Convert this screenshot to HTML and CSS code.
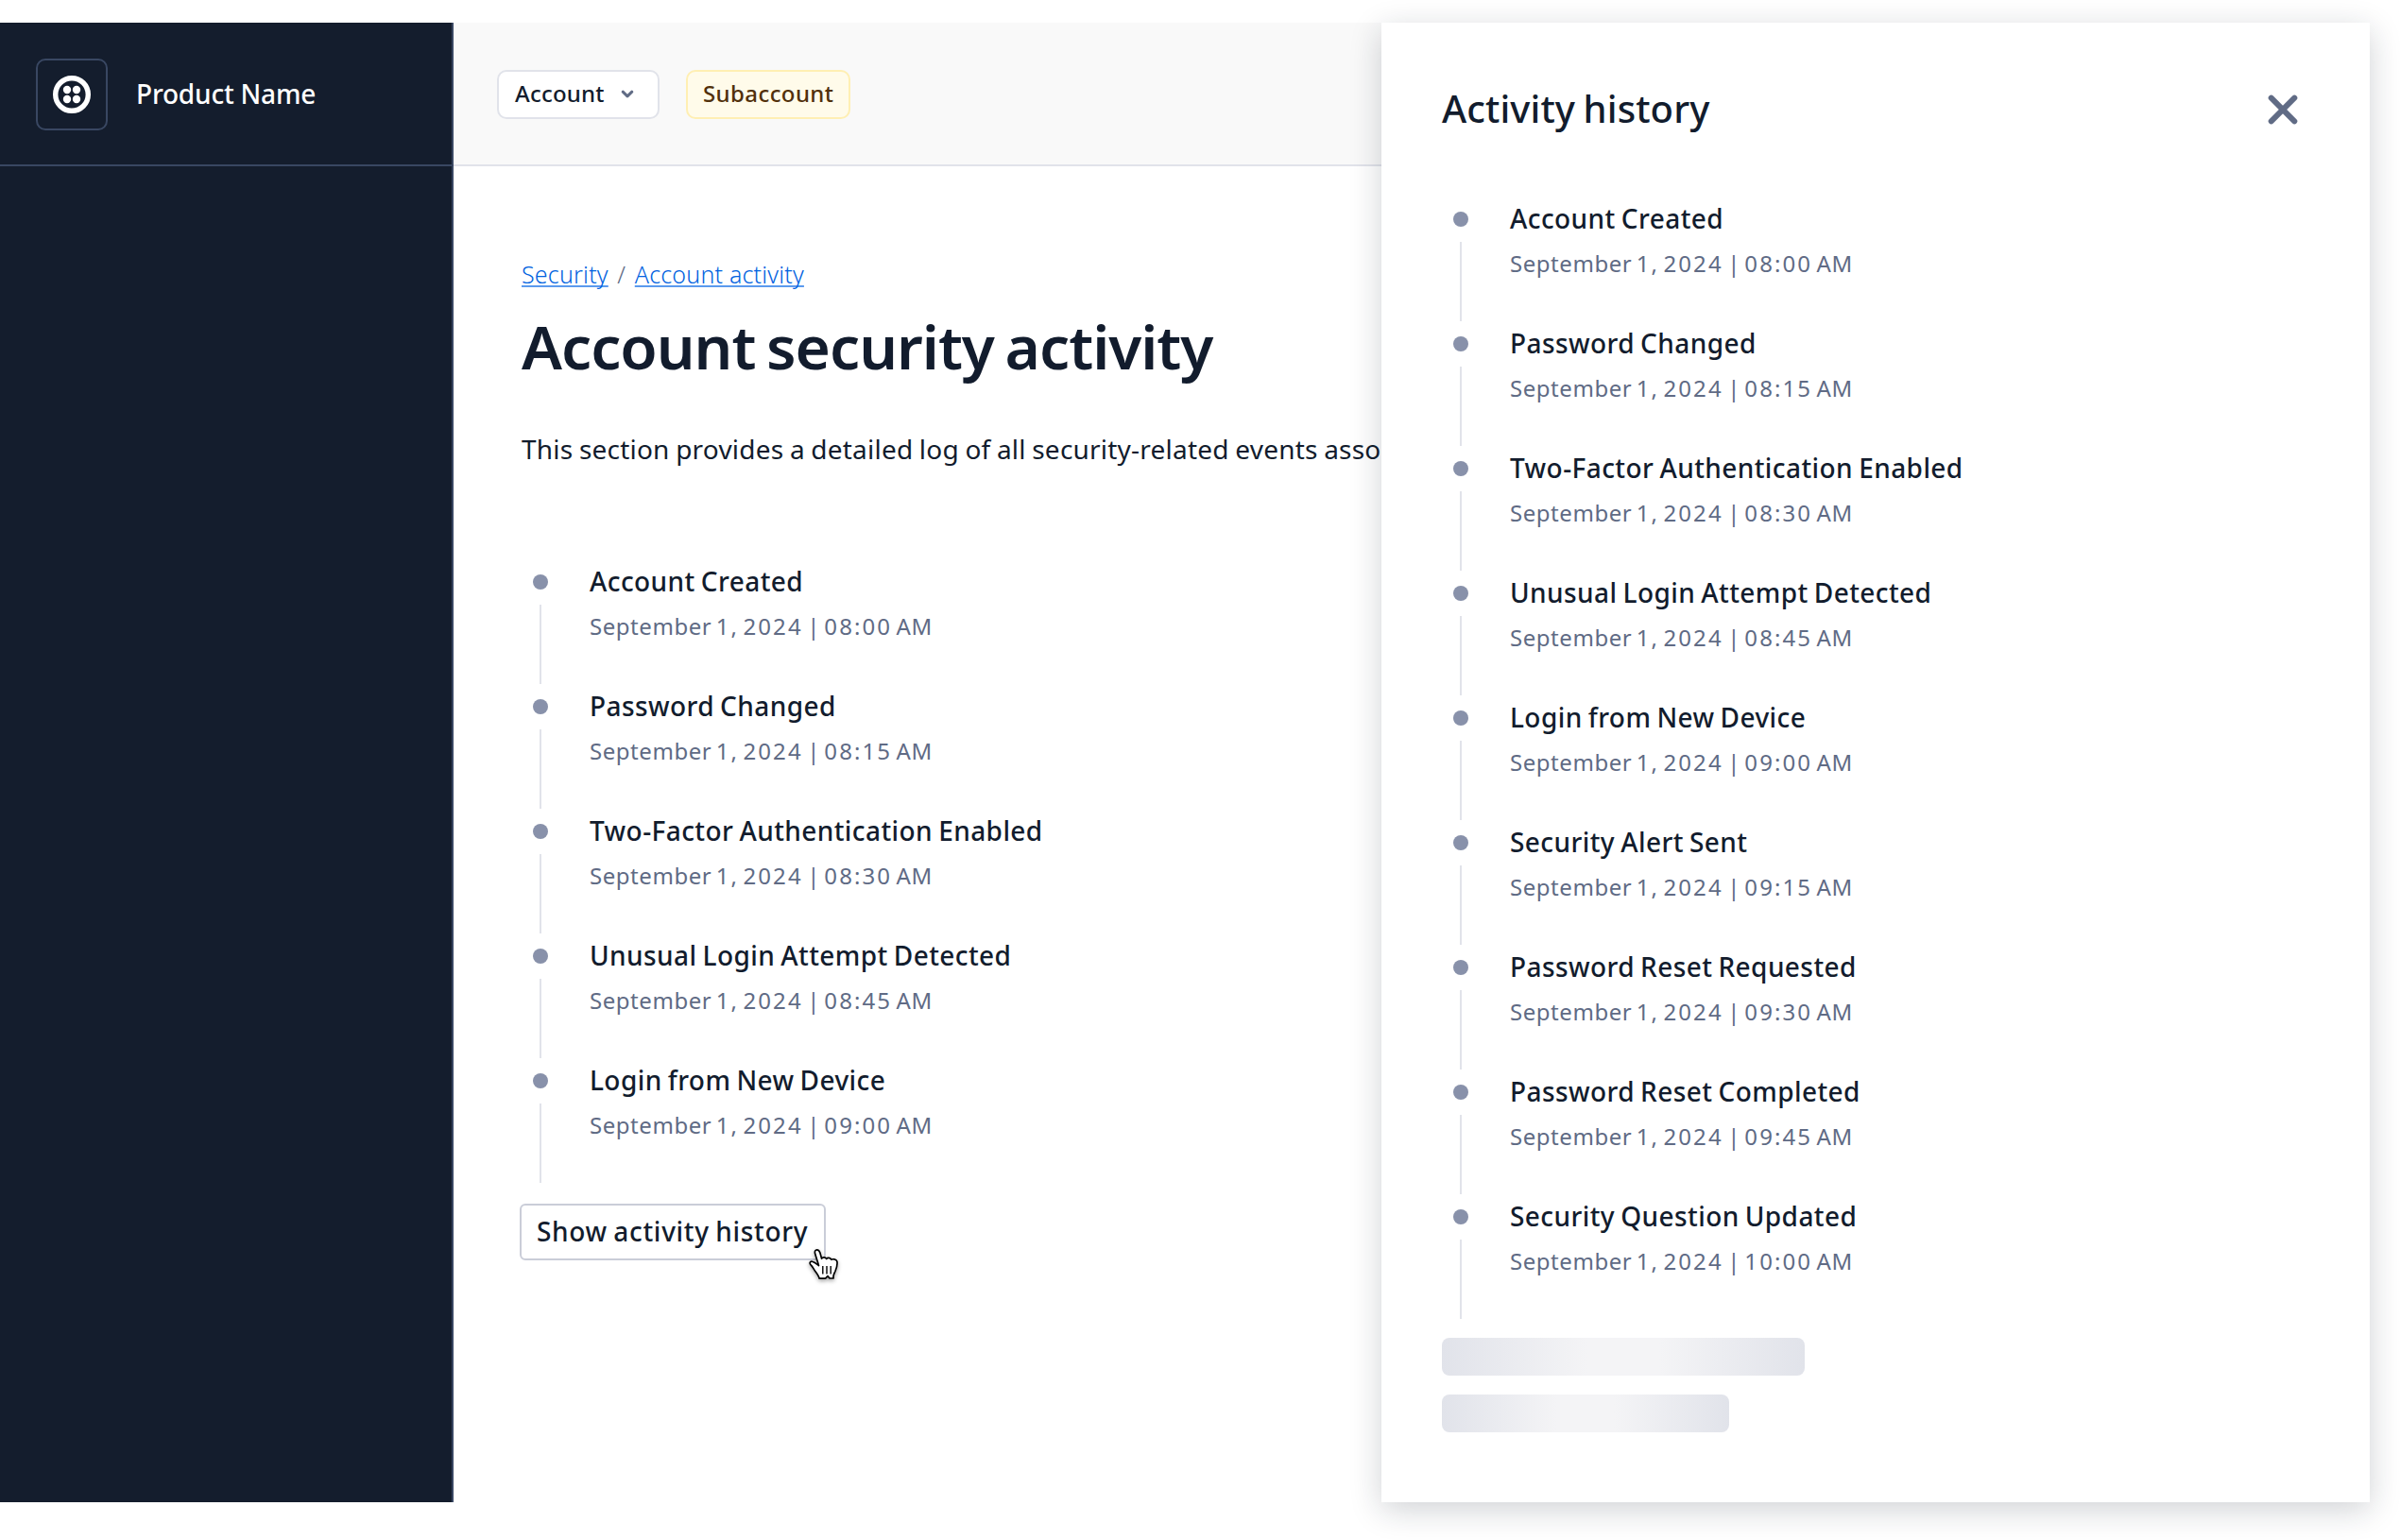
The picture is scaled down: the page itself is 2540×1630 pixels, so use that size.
FILE: index.html
```html
<!DOCTYPE html>
<html lang="en">
<head>
<meta charset="utf-8">
<title>Account security activity</title>
<link rel="stylesheet" href="styles.css">
</head>
<body>
<div class="shell">
  <aside class="sidebar">
    <div class="brand">
      <span class="logo">
        <svg width="40" height="40" viewBox="0 0 40 40"><circle cx="20" cy="20" r="17.3" fill="none" stroke="#fff" stroke-width="5.4"/><g fill="#fff"><circle cx="15" cy="15" r="4.2"/><circle cx="25" cy="15" r="4.2"/><circle cx="15" cy="25" r="4.2"/><circle cx="25" cy="25" r="4.2"/></g></svg>
      </span>
      <span class="brand-name">Product Name</span>
    </div>
  </aside>
  <div class="content">
    <header class="topbar">
      <button class="account">Account
        <svg width="14" height="10" viewBox="0 0 14 10"><path d="M2.2 3.200 7 7.800l4.800-4.600" fill="none" stroke="#606b85" stroke-width="3" stroke-linecap="round" stroke-linejoin="round"/></svg>
      </button>
      <span class="badge">Subaccount</span>
    </header>
    <main class="main">
      <nav class="crumbs"><a href="#">Security</a><span class="slash">/</span><a href="#">Account activity</a></nav>
      <h1>Account security activity</h1>
      <p class="intro">This section provides a detailed log of all security-related events associated</p>
      <ol class="timeline">
        <li><span class="rail"></span><div><h3>Account Created</h3><time>September <b>1,</b> <b>2024</b> | <b>08:00</b> AM</time></div></li>
        <li><span class="rail"></span><div><h3>Password Changed</h3><time>September <b>1,</b> <b>2024</b> | <b>08:15</b> AM</time></div></li>
        <li><span class="rail"></span><div><h3>Two-Factor Authentication Enabled</h3><time>September <b>1,</b> <b>2024</b> | <b>08:30</b> AM</time></div></li>
        <li><span class="rail"></span><div><h3>Unusual Login Attempt Detected</h3><time>September <b>1,</b> <b>2024</b> | <b>08:45</b> AM</time></div></li>
        <li><span class="rail"></span><div><h3>Login from New Device</h3><time>September <b>1,</b> <b>2024</b> | <b>09:00</b> AM</time></div></li>
      </ol>
      <button class="show">Show activity history
        <svg class="cursor" width="50" height="50" viewBox="0 0 50 50"><path d="M20.500 25.500C19.200 20.500 17.600 16.500 16.600 12.800 15.900 10.400 17 8.800 18.600 8.800c1.800 0 2.700 1.200 3.300 3.200l1.700 6.200c.8-1.800 4-2 5 .2 1.200-1.600 4.200-1.400 5.200.8 1.200-.8 5.200-.6 6 1.800.8 3-.4 7-1.800 10.500-1.200 2.500-2 4-2 5.500v2h-4l-2-2.400-2.400 2.600h-6.400c-.6-2.600-2.800-5.600-4.800-8.200-1.600-2.400-2.600-4.600-4.200-6-2-2-.8-4.400 1.400-3.800 2.400.6 4.400 2.300 6.900 4.300z" fill="#fff" stroke="#000" stroke-width="1.700" stroke-linejoin="round"/><path d="M24.800 26v8.500M29 26v8.500M33.200 26v8.500" stroke="#000" stroke-width="1.400"/></svg>
      </button>
    </main>
  </div>
  <section class="drawer">
    <div class="drawer-head">
      <h2>Activity history</h2>
      <svg width="32" height="32" viewBox="0 0 32 32"><path d="M3.700 3.700 28.300 28.300M28.300 3.700 3.700 28.300" stroke="#606b85" stroke-width="6" stroke-linecap="round"/></svg>
    </div>
    <ol class="timeline">
      <li><span class="rail"></span><div><h3>Account Created</h3><time>September <b>1,</b> <b>2024</b> | <b>08:00</b> AM</time></div></li>
      <li><span class="rail"></span><div><h3>Password Changed</h3><time>September <b>1,</b> <b>2024</b> | <b>08:15</b> AM</time></div></li>
      <li><span class="rail"></span><div><h3>Two-Factor Authentication Enabled</h3><time>September <b>1,</b> <b>2024</b> | <b>08:30</b> AM</time></div></li>
      <li><span class="rail"></span><div><h3>Unusual Login Attempt Detected</h3><time>September <b>1,</b> <b>2024</b> | <b>08:45</b> AM</time></div></li>
      <li><span class="rail"></span><div><h3>Login from New Device</h3><time>September <b>1,</b> <b>2024</b> | <b>09:00</b> AM</time></div></li>
      <li><span class="rail"></span><div><h3>Security Alert Sent</h3><time>September <b>1,</b> <b>2024</b> | <b>09:15</b> AM</time></div></li>
      <li><span class="rail"></span><div><h3>Password Reset Requested</h3><time>September <b>1,</b> <b>2024</b> | <b>09:30</b> AM</time></div></li>
      <li><span class="rail"></span><div><h3>Password Reset Completed</h3><time>September <b>1,</b> <b>2024</b> | <b>09:45</b> AM</time></div></li>
      <li><span class="rail"></span><div><h3>Security Question Updated</h3><time>September <b>1,</b> <b>2024</b> | <b>10:00</b> AM</time></div></li>
    </ol>
    <div class="skeletons"><span class="bar wide"></span><span class="bar"></span></div>
  </section>
</div>
</body>
</html>
```
FILE: styles.css
```css
* { box-sizing: border-box; margin: 0; padding: 0; }
body {
  width: 2540px;
  height: 1630px;
  padding: 24px 32px 40px 0;
  overflow: hidden;
  background: #fff;
  color: #121c2d;
  font-family: "Noto Sans", "Open Sans", sans-serif;
  font-weight: 500;
}
h1, h2, h3, button { font-weight: 500; font-family: inherit; color: inherit; }
svg { display: block; flex: none; }
ol { list-style: none; }

.shell { display: flex; height: 1566px; }

.sidebar { width: 480px; flex: none; background: #141d2d; border-right: 2px solid #394762; }
.brand {
  display: flex;
  align-items: center;
  gap: 30px;
  height: 152px;
  padding: 2px 0 0 38px;
  border-bottom: 2px solid #394762;
}
.logo {
  display: grid;
  place-items: center;
  width: 76px;
  height: 76px;
  border: 2px solid #394762;
  border-radius: 10px;
}
.brand-name { padding-bottom: 2px; color: #fff; font-size: 28px; line-height: 38px; letter-spacing: -.2px; }

.content { width: 982px; flex: none; }
.topbar {
  display: flex;
  align-items: center;
  gap: 28px;
  height: 152px;
  padding: 2px 0 0 46px;
  background: #f9f9f9;
  border-bottom: 2px solid #e1e3ea;
}
.account, .badge {
  display: flex;
  align-items: center;
  height: 52px;
  padding-bottom: 2px;
  border: 2px solid #e1e3ea;
  border-radius: 10px;
  background: #fff;
  font-size: 24px;
  font-weight: 500;
  line-height: 32px;
}
.account { width: 172px; gap: 17px; padding-left: 17px; letter-spacing: .2px; }
.badge {
  width: 174px;
  padding-left: 16px;
  border-color: #ffefb3;
  background: #fffbea;
  color: #51300b;
  letter-spacing: .4px;
}

.main { display: flex; flex-direction: column; align-items: flex-start; padding: 94px 0 0 70px; }
.crumbs {
  display: flex;
  padding-left: 2px;
  font-size: 25px;
  font-weight: 300;
  line-height: 40px;
  letter-spacing: .2px;
}
.crumbs a {
  color: #0263e0;
  text-decoration: underline #5b9aee 2px;
  text-underline-offset: 2px;
  text-decoration-skip-ink: none;
}
.slash { width: 28px; color: #606b85; text-align: center; }
h1 {
  margin-top: 17px;
  padding-left: 2px;
  font-size: 64px;
  font-weight: 600;
  line-height: 80px;
  letter-spacing: -1px;
  word-spacing: -4px;
}
.intro {
  margin-top: 48px;
  padding-left: 2px;
  font-size: 28px;
  font-weight: 400;
  line-height: 40px;
  letter-spacing: .22px;
  word-spacing: -1px;
  white-space: nowrap;
}

.timeline { margin: 105px 0 0 14px; }
.timeline li { display: flex; gap: 44px; height: 132px; }
.rail { display: flex; flex-direction: column; align-items: center; gap: 16px; width: 16px; padding-top: 8px; }
.rail::before { content: ""; width: 16px; height: 16px; border-radius: 50%; background: #8891aa; }
.rail::after { content: ""; width: 2px; height: 84px; background: #e1e3ea; }
h3 { font-size: 28px; line-height: 30px; letter-spacing: .42px; word-spacing: -1.6px; white-space: nowrap; }
time {
  display: block;
  margin-top: 17px;
  color: #606b85;
  font-size: 24px;
  font-weight: 400;
  line-height: 32px;
  letter-spacing: .55px;
  word-spacing: -2.4px;
  white-space: nowrap;
}
time b { font-weight: 400; letter-spacing: 2.1px; }

.show {
  position: relative;
  width: 324px;
  height: 60px;
  margin-top: 14px;
  padding: 0 0 2px 16px;
  border: 2px solid #cacdd8;
  border-radius: 6px;
  background: #fff;
  font-size: 28px;
  line-height: 38px;
  letter-spacing: .7px;
  word-spacing: -1.6px;
  text-align: left;
  white-space: nowrap;
}
.cursor {
  position: absolute;
  left: 294px;
  top: 38px;
  filter: drop-shadow(0 2px 2px rgba(0, 0, 0, .35));
}

.drawer {
  position: relative;
  width: 1046px;
  flex: none;
  padding: 64px 76px 0 64px;
  background: #fff;
  box-shadow: 0 8px 32px rgba(18, 28, 45, .2);
}
.drawer-head { display: flex; align-items: center; justify-content: space-between; height: 56px; }
h2 { padding-bottom: 2px; font-size: 40px; line-height: 54px; letter-spacing: .1px; word-spacing: -2px; }
.drawer .timeline { margin: 72px 0 0 12px; }
.skeletons { display: flex; flex-direction: column; gap: 20px; margin-top: 12px; }
.bar {
  width: 304px;
  height: 40px;
  border-radius: 8px;
  background: linear-gradient(90deg, #e1e3ea, #f4f4f6 40%, #f4f4f6 60%, #e1e3ea);
}
.bar.wide { width: 384px; }
```
